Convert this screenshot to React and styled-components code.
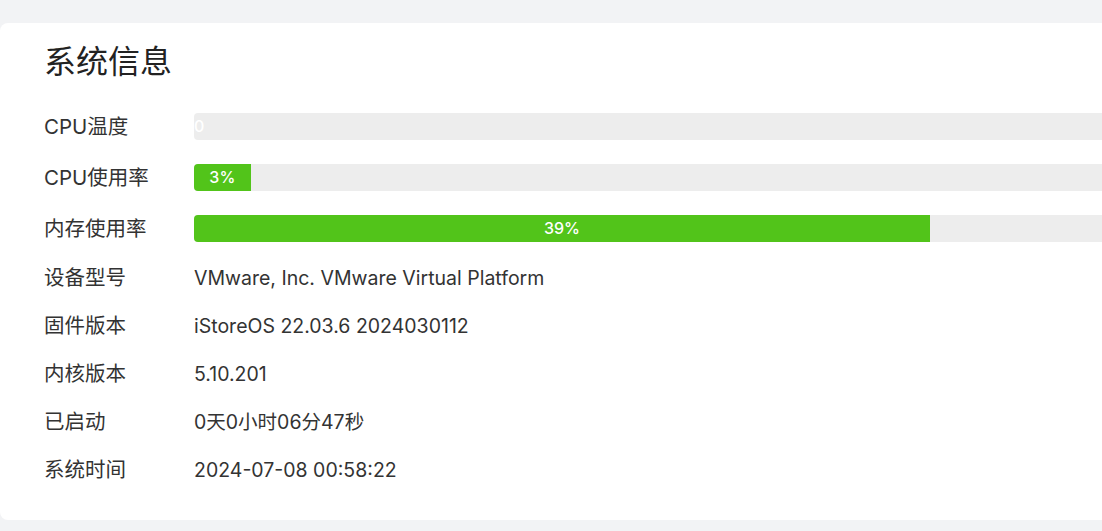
import styled, { createGlobalStyle } from "styled-components"

const bars = [
  { label: 'CPU温度', value: 0, text: '0' },
  { label: 'CPU使用率', value: 3, text: '3%' },
  { label: '内存使用率', value: 39, text: '39%' },
]

const info = [
  ['设备型号', 'VMware, Inc. VMware Virtual Platform'],
  ['固件版本', 'iStoreOS 22.03.6 2024030112'],
  ['内核版本', '5.10.201'],
  ['已启动', '0天0小时06分47秒'],
  ['系统时间', '2024-07-08 00:58:22'],
]

export default function App() {
  return (
    <>
      <GlobalStyle />
      <Page>
        <Card>
          <Title>系统信息</Title>
          {bars.map((bar) => (
            <Row key={bar.label}>
              <Label>{bar.label}</Label>
              <Track>
                <Fill style={{ width: `${bar.value}%` }}>{bar.text}</Fill>
              </Track>
            </Row>
          ))}
          {info.map(([label, value]) => (
            <Row key={label}>
              <Label>{label}</Label>
              <Value>{value}</Value>
            </Row>
          ))}
        </Card>
      </Page>
    </>
  )
}

const GlobalStyle = createGlobalStyle`
  html, body {
    margin: 0;
    overflow: hidden;
    background: #f2f3f5;
  }
`

const Page = styled.div`
  padding-top: 23px;
  font-family: Inter, "Noto Sans CJK SC", sans-serif;
  color: #333333;
`

const Card = styled.div`
  width: 2150px;
  background: #ffffff;
  border-radius: 8px;
  padding: 19px 44px 26px;
  box-sizing: border-box;
`

const Title = styled.h2`
  margin: 0 0 19px;
  font-size: 32px;
  line-height: 40px;
  font-weight: 400;
  color: #222222;
`

const Row = styled.div`
  display: grid;
  grid-template-columns: 150px 1887px;
  align-items: center;
  padding: 12px 0;
`

const Label = styled.div`
  font-size: 20.5px;
  line-height: 24px;
`

const Value = styled.div`
  font-size: 19.5px;
  line-height: 24px;
`

const Track = styled.div`
  height: 27px;
  background: #ededed;
  border-radius: 4px;
  overflow: hidden;
  display: flex;
`

const Fill = styled.div`
  background: #52c41a;
  color: #ffffff;
  font-size: 16px;
  font-weight: 500;
  line-height: 27px;
  text-align: center;
  white-space: nowrap;
  overflow: visible;
`
